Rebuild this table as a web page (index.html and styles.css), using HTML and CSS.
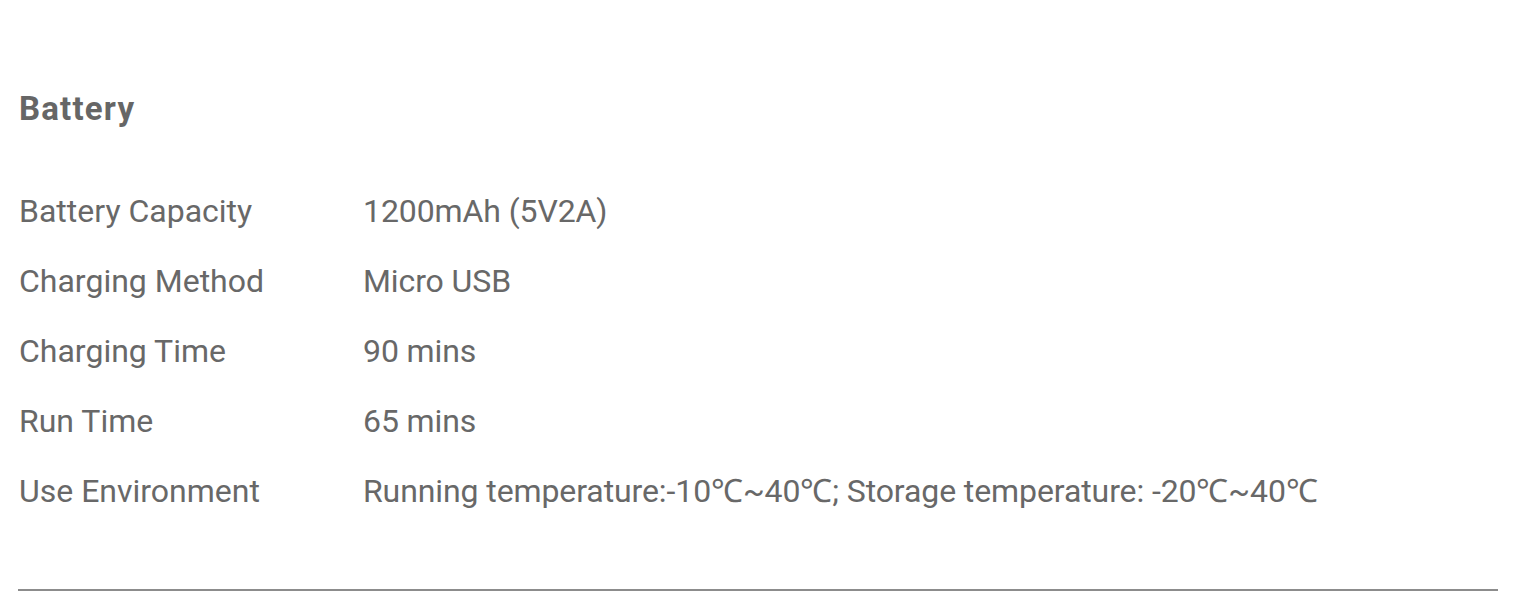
FILE: index.html
```html
<!DOCTYPE html>
<html lang="en">
<head>
<meta charset="utf-8">
<title>Battery</title>
<link rel="stylesheet" href="styles.css">
</head>
<body>
<section class="spec">
  <h2 class="spec-title">Battery</h2>
  <dl class="spec-list">
    <div class="spec-row"><dt>Battery Capacity</dt><dd>1200mAh (5V2A)</dd></div>
    <div class="spec-row"><dt>Charging Method</dt><dd>Micro USB</dd></div>
    <div class="spec-row"><dt>Charging Time</dt><dd>90 mins</dd></div>
    <div class="spec-row"><dt>Run Time</dt><dd>65 mins</dd></div>
    <div class="spec-row"><dt>Use Environment</dt><dd>Running temperature:-10℃~40℃; Storage temperature: -20℃~40℃</dd></div>
  </dl>
  <hr class="spec-divider">
</section>
</body>
</html>
```
FILE: styles.css
```css
html, body {
  margin: 0;
  padding: 0;
  background: #ffffff;
}
body {
  font-family: Roboto, "Liberation Sans", sans-serif;
  color: #686868;
}
.spec {
  padding: 89px 38px 0 18px;
}
.spec-title {
  margin: 0 0 47px 0;
  font-size: 33px;
  font-weight: 700;
  line-height: 40px;
  letter-spacing: 1.2px;
  color: #666666;
  padding-left: 1px;
}
.spec-list {
  margin: 0;
}
.spec-row {
  display: flex;
  font-size: 32px;
  line-height: 70px;
}
.spec-row dt {
  width: 344px;
  flex: none;
  padding-left: 1px;
}
.spec-row dd {
  margin: 0;
  letter-spacing: -0.1px;
}
.spec-divider {
  margin: 63px 0 0 0;
  border: none;
  height: 2px;
  background: #8c8c8c;
}
```
